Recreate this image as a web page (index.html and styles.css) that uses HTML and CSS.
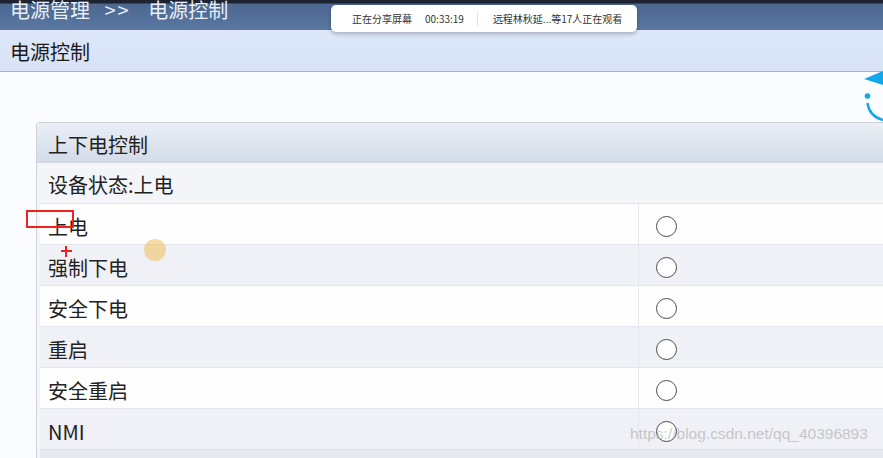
FILE: index.html
```html
<!DOCTYPE html>
<html lang="zh-CN">
<head>
    <meta charset="UTF-8">
    <title>电源控制</title>
    <link rel="stylesheet" href="styles.css">
</head>
<body>
    <div class="topbar">
        <span class="crumb">电源管理 <span class="arrow">&gt;&gt;</span> 电源控制</span>
    </div>
    <div class="subbar">电源控制</div>

    <div class="content">
        <div class="panel">
            <div class="panel-head">上下电控制</div>
            <div class="status">设备状态:上电</div>
            <div class="row"><div class="label">上电</div><div class="opt"><span class="radio"></span></div></div>
            <div class="row alt"><div class="label">强制下电</div><div class="opt"><span class="radio"></span></div></div>
            <div class="row"><div class="label">安全下电</div><div class="opt"><span class="radio"></span></div></div>
            <div class="row alt"><div class="label">重启</div><div class="opt"><span class="radio"></span></div></div>
            <div class="row"><div class="label">安全重启</div><div class="opt"><span class="radio"></span></div></div>
            <div class="row alt"><div class="label">NMI</div><div class="opt"><span class="radio"></span></div></div>
            <div class="panel-foot"></div>
        </div>
    </div>

    <!-- screen share toolbar -->
    <div class="share">
        <span>正在分享屏幕</span>
        <span class="time">00:33:19</span>
        <span class="sep"></span>
        <span>远程林秋延...等17人正在观看</span>
    </div>

    <!-- side assistant icon -->
    <svg class="side-icon" width="19" height="50" viewBox="0 0 19 50">
        <polygon points="19,0 19,14 0,8" fill="#12a7e8"/>
        <circle cx="3.5" cy="25" r="2.8" fill="#12a7e8"/>
        <path d="M3.5 32 Q5 45 19 49" fill="none" stroke="#12a7e8" stroke-width="2.4"/>
    </svg>

    <!-- annotation marks -->
    <div class="mark-box"></div>
    <div class="mark-cross"></div>
    <div class="cursor-dot"></div>

    <div class="watermark">https://blog.csdn.net/qq_40396893</div>
</body>
</html>
```

FILE: styles.css
```css
body {
    margin: 0;
    width: 883px;
    height: 458px;
    overflow: hidden;
    position: relative;
    font-family: "Noto Sans CJK SC", "Noto Sans", sans-serif;
    background: #fafcff;
}
.topbar {
    height: 30px;
    overflow: hidden;
    background: linear-gradient(#1d2330 0, #1d2330 3px, #4c6790 4px, #5a78a2 100%);
}
.crumb {
    display: block;
    margin-top: -5px;
    padding-left: 10px;
    font-size: 20px;
    line-height: 30px;
    color: #e9eef7;
}
.crumb .arrow {
    margin: 0 13px 0 10px;
    letter-spacing: 2px;
}
.subbar {
    height: 41px;
    line-height: 43px;
    padding-left: 10px;
    font-size: 20px;
    color: #1b1b1b;
    background: linear-gradient(#dde7fa, #d9e3f6);
    border-bottom: 1px solid #a9b1d8;
}
.content {
    padding: 50px 0 0 36px;
}
.panel {
    border: 1px solid #cdd1d9;
    border-right: none;
    border-bottom: none;
    border-radius: 4px 0 0 0;
    background: #f3f5f9;
}
.panel-head {
    height: 39px;
    line-height: 44px;
    padding-left: 11px;
    font-size: 20px;
    color: #222;
    background: linear-gradient(#ebeff6, #d2dbe8);
    border-bottom: 1px solid #cfd6e2;
}
.status {
    height: 40px;
    line-height: 44px;
    padding-left: 11px;
    font-size: 20px;
    color: #222;
    background: #f3f5f9;
}
.row {
    display: flex;
    height: 40px;
    margin-left: 3px;
    background: #fefefe;
    border-top: 1px solid #e3e6ec;
}
.row.alt {
    background: #eff1f6;
}
.label {
    width: 590px;
    padding-left: 8px;
    line-height: 45px;
    font-size: 20px;
    color: #222;
    border-right: 1px solid #e4e7ed;
}
.opt {
    display: flex;
    align-items: center;
    padding: 4px 0 0 17px;
}
.radio {
    width: 19px;
    height: 19px;
    border: 1.5px solid #4a4a4a;
    border-radius: 50%;
    background: #fff;
}
.panel-foot {
    height: 12px;
    margin-left: 3px;
    background: #e6e9ef;
    border-top: 1px solid #dde0e7;
}
.share {
    position: absolute;
    left: 331px;
    top: 5px;
    width: 306px;
    height: 27px;
    display: flex;
    align-items: center;
    gap: 13px;
    padding-left: 21px;
    box-sizing: border-box;
    background: #fff;
    border-radius: 5px;
    box-shadow: 0 2px 4px rgba(0,0,0,0.25);
    font-size: 10px;
    color: #333;
}
.share .sep {
    width: 1px;
    height: 14px;
    margin-right: 2px;
    background: #e3e3e3;
}
.side-icon {
    position: absolute;
    right: 0;
    top: 71px;
}
.mark-box {
    position: absolute;
    left: 26px;
    top: 210px;
    width: 44px;
    height: 14px;
    border: 2px solid #f0221d;
}
.mark-cross {
    position: absolute;
    left: 61px;
    top: 246px;
    width: 11px;
    height: 11px;
}
.mark-cross::before,
.mark-cross::after {
    content: "";
    position: absolute;
    background: #f02020;
}
.mark-cross::before {
    left: 0;
    top: 4px;
    width: 11px;
    height: 2px;
}
.mark-cross::after {
    left: 4px;
    top: 0;
    width: 2px;
    height: 11px;
}
.cursor-dot {
    position: absolute;
    left: 144px;
    top: 239px;
    width: 22px;
    height: 22px;
    border-radius: 50%;
    background: rgba(240, 190, 90, 0.55);
}
.watermark {
    position: absolute;
    left: 630px;
    top: 425px;
    font-family: "Liberation Sans", sans-serif;
    font-size: 15.5px;
    color: rgba(160, 160, 160, 0.55);
}
```
